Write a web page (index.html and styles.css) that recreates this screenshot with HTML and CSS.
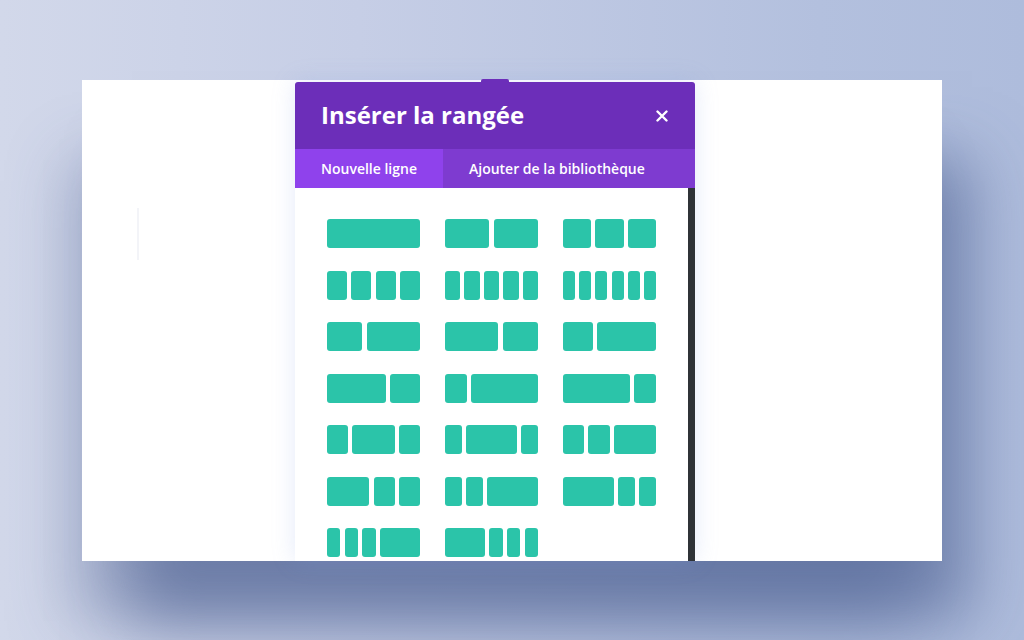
FILE: index.html
```html
<!DOCTYPE html>
<html lang="fr">
<head>
<meta charset="utf-8">
<title>Insérer la rangée</title>
<link rel="stylesheet" href="styles.css">
</head>
<body>
<div class="stage">
  <div class="card">
    <div class="faint-line"></div>
    <div class="modal">
      <div class="modal-nub"></div>
      <div class="modal-header">
        <h1 class="modal-title">Insérer la rangée</h1>
        <button class="close" aria-label="Fermer">
          <svg width="12" height="12" viewBox="0 0 12 12"><path d="M1.5 1.5 L10.5 10.5 M10.5 1.5 L1.5 10.5" stroke="#fff" stroke-width="2.4" stroke-linecap="round"/></svg>
        </button>
      </div>
      <div class="tabs">
        <div class="tab active">Nouvelle ligne</div>
        <div class="tab">Ajouter de la bibliothèque</div>
      </div>
      <div class="modal-body">
        <div class="layouts">
          <div class="layout"><span style="flex-grow:1"></span></div>
          <div class="layout"><span style="flex-grow:1"></span><span style="flex-grow:1"></span></div>
          <div class="layout"><span style="flex-grow:1"></span><span style="flex-grow:1"></span><span style="flex-grow:1"></span></div>

          <div class="layout"><span style="flex-grow:1"></span><span style="flex-grow:1"></span><span style="flex-grow:1"></span><span style="flex-grow:1"></span></div>
          <div class="layout"><span style="flex-grow:1"></span><span style="flex-grow:1"></span><span style="flex-grow:1"></span><span style="flex-grow:1"></span><span style="flex-grow:1"></span></div>
          <div class="layout"><span style="flex-grow:1"></span><span style="flex-grow:1"></span><span style="flex-grow:1"></span><span style="flex-grow:1"></span><span style="flex-grow:1"></span><span style="flex-grow:1"></span></div>

          <div class="layout"><span style="flex-grow:2"></span><span style="flex-grow:3"></span></div>
          <div class="layout"><span style="flex-grow:3"></span><span style="flex-grow:2"></span></div>
          <div class="layout"><span style="flex-grow:1"></span><span style="flex-grow:2"></span></div>

          <div class="layout"><span style="flex-grow:2"></span><span style="flex-grow:1"></span></div>
          <div class="layout"><span style="flex-grow:1"></span><span style="flex-grow:3"></span></div>
          <div class="layout"><span style="flex-grow:3"></span><span style="flex-grow:1"></span></div>

          <div class="layout"><span style="flex-grow:1"></span><span style="flex-grow:2"></span><span style="flex-grow:1"></span></div>
          <div class="layout"><span style="flex-grow:1"></span><span style="flex-grow:3"></span><span style="flex-grow:1"></span></div>
          <div class="layout"><span style="flex-grow:1"></span><span style="flex-grow:1"></span><span style="flex-grow:2"></span></div>

          <div class="layout"><span style="flex-grow:2"></span><span style="flex-grow:1"></span><span style="flex-grow:1"></span></div>
          <div class="layout"><span style="flex-grow:1"></span><span style="flex-grow:1"></span><span style="flex-grow:3"></span></div>
          <div class="layout"><span style="flex-grow:3"></span><span style="flex-grow:1"></span><span style="flex-grow:1"></span></div>

          <div class="layout"><span style="flex-grow:1"></span><span style="flex-grow:1"></span><span style="flex-grow:1"></span><span style="flex-grow:3"></span></div>
          <div class="layout"><span style="flex-grow:3"></span><span style="flex-grow:1"></span><span style="flex-grow:1"></span><span style="flex-grow:1"></span></div>
        </div>
        <div class="scrollbar"></div>
      </div>
    </div>
  </div>
</div>
</body>
</html>
```

FILE: styles.css
```css
* { box-sizing: border-box; }
html, body {
  margin: 0;
  padding: 0;
  width: 1024px;
  height: 640px;
  overflow: hidden;
}
body {
  font-family: "Open Sans", "Noto Sans", sans-serif;
  background: linear-gradient(90deg, #d2d8ea 0%, #c6cee6 35%, #b3c0de 80%, #aebcdc 100%);
}
.stage {
  width: 1024px;
  height: 640px;
  padding: 80px 0 0 82px;
}
.card {
  position: relative;
  width: 860px;
  height: 481px;
  background: #ffffff;
  box-shadow:
    40px 70px 60px -10px rgba(70, 90, 140, 0.55),
    -20px 70px 60px -10px rgba(70, 90, 140, 0.35);
}
.faint-line {
  position: absolute;
  left: 55px;
  top: 128px;
  width: 2px;
  height: 52px;
  background: #f3f4f8;
}
.modal {
  position: absolute;
  left: 213px;
  top: 2px;
  width: 400px;
  height: 479px;
  display: flex;
  flex-direction: column;
  background: #ffffff;
  box-shadow: 0 0 22px rgba(130, 160, 230, 0.22);
}
.modal-nub {
  position: absolute;
  left: 186px;
  top: -3px;
  width: 28px;
  height: 4px;
  background: #6c2eb9;
  border-radius: 2px 2px 0 0;
}
.modal-header {
  height: 67px;
  background: #6c2eb9;
  display: flex;
  align-items: center;
  justify-content: space-between;
  padding: 0 27px 0 26px;
  border-radius: 3px 3px 0 0;
}
.modal-title {
  margin: 0;
  color: #ffffff;
  font-size: 24px;
  font-weight: 700;
  letter-spacing: 0;
  line-height: 1;
  padding-bottom: 2px;
}
.close {
  background: none;
  border: 0;
  padding: 0;
  width: 12px;
  height: 12px;
  display: flex;
  cursor: pointer;
}
.tabs {
  height: 39px;
  background: #7e3bd0;
  display: flex;
}
.tab {
  padding: 0 26px;
  display: flex;
  align-items: center;
  color: #ffffff;
  font-size: 14px;
  font-weight: 600;
  white-space: nowrap;
}
.tab.active {
  background: #8f42ec;
}
.modal-body {
  flex: 1;
  display: flex;
  overflow: hidden;
}
.layouts {
  flex: 1;
  padding: 31px 0 0 32px;
  display: grid;
  grid-template-columns: repeat(3, 93px);
  grid-auto-rows: 29px;
  column-gap: 25px;
  row-gap: 22.5px;
  align-content: start;
}
.layout {
  display: flex;
  gap: 4.3px;
}
.layout span {
  flex-basis: 0;
  min-width: 0;
  background: #2bc4a9;
  border-radius: 3px;
}
.scrollbar {
  width: 7px;
  background: #2f3337;
}
```
